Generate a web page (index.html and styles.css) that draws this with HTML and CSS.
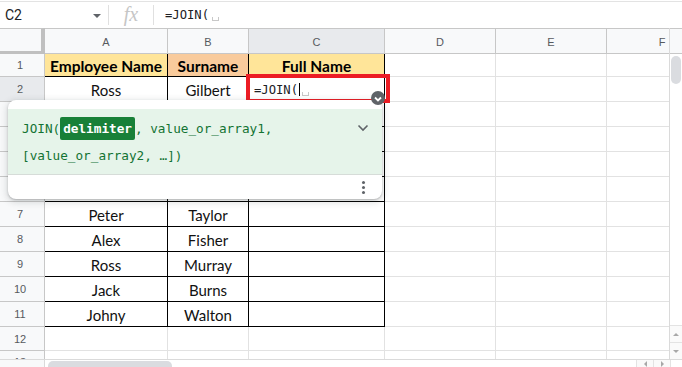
FILE: index.html
```html
<!DOCTYPE html>
<html>
<head>
<meta charset="utf-8">
<link rel="stylesheet" href="styles.css">
</head>
<body>
<div class="app">
  <div class="fbar">
    <div class="namebox"><span class="ref">C2</span><span class="caret-down"></span></div>
    <div class="sep"></div>
    <div class="fx">fx</div>
    <div class="sep"></div>
    <div class="ftext">=JOIN(<span class="spacemark"></span></div>
  </div>

  <div class="main">
    <div class="viewport">
      <div class="sheet">
        <div class="corner"></div>
        <div class="ch">A</div>
        <div class="ch">B</div>
        <div class="ch sel">C</div>
        <div class="ch">D</div>
        <div class="ch">E</div>
        <div class="ch">F</div>

        <div class="rh">1</div>
        <div class="c t hd yel">Employee Name</div>
        <div class="c t hd peach">Surname</div>
        <div class="c t hd yel">Full Name</div>
        <div class="c"></div><div class="c"></div><div class="c"></div>

        <div class="rh sel">2</div>
        <div class="c t">Ross</div>
        <div class="c t">Gilbert</div>
        <div class="c t edit-cell"><span class="etext">=JOIN(</span><span class="cursor"></span><span class="spacemark"></span></div>
        <div class="c"></div><div class="c"></div><div class="c"></div>

        <div class="rh">3</div>
        <div class="c t"></div>
        <div class="c t"></div>
        <div class="c t"></div>
        <div class="c"></div><div class="c"></div><div class="c"></div>

        <div class="rh">4</div>
        <div class="c t"></div>
        <div class="c t"></div>
        <div class="c t"></div>
        <div class="c"></div><div class="c"></div><div class="c"></div>

        <div class="rh">5</div>
        <div class="c t"></div>
        <div class="c t"></div>
        <div class="c t"></div>
        <div class="c"></div><div class="c"></div><div class="c"></div>

        <div class="rh">6</div>
        <div class="c t"></div>
        <div class="c t"></div>
        <div class="c t"></div>
        <div class="c"></div><div class="c"></div><div class="c"></div>

        <div class="rh">7</div>
        <div class="c t">Peter</div>
        <div class="c t">Taylor</div>
        <div class="c t"></div>
        <div class="c"></div><div class="c"></div><div class="c"></div>

        <div class="rh">8</div>
        <div class="c t">Alex</div>
        <div class="c t">Fisher</div>
        <div class="c t"></div>
        <div class="c"></div><div class="c"></div><div class="c"></div>

        <div class="rh">9</div>
        <div class="c t">Ross</div>
        <div class="c t">Murray</div>
        <div class="c t"></div>
        <div class="c"></div><div class="c"></div><div class="c"></div>

        <div class="rh">10</div>
        <div class="c t">Jack</div>
        <div class="c t">Burns</div>
        <div class="c t"></div>
        <div class="c"></div><div class="c"></div><div class="c"></div>

        <div class="rh">11</div>
        <div class="c t">Johny</div>
        <div class="c t">Walton</div>
        <div class="c t"></div>
        <div class="c"></div><div class="c"></div><div class="c"></div>

        <div class="rh">12</div>
        <div class="c"></div><div class="c"></div><div class="c"></div>
        <div class="c"></div><div class="c"></div><div class="c"></div>

        <div class="rh rh13">13</div>
        <div class="c"></div><div class="c"></div><div class="c"></div>
        <div class="c"></div><div class="c"></div><div class="c"></div>
      </div>
    </div>
    <div class="vscroll">
      <div class="vs-head"></div>
      <div class="vs-track"><div class="vs-thumb"></div></div>
      <div class="vs-btn"><span class="tri-up"></span></div>
      <div class="vs-btn"><span class="tri-down"></span></div>
    </div>
  </div>

  <div class="hbar">
    <div class="hb-left"></div>
    <div class="hb-track"><div class="hb-thumb"></div></div>
    <div class="hb-btn"><span class="tri-left"></span></div>
    <div class="hb-btn"><span class="tri-right"></span></div>
    <div class="hb-corner"></div>
  </div>

  <div class="redbox"></div>
  <div class="pill">
    <svg width="8" height="6" viewBox="0 0 8 6"><path d="M1 1.5 L4 4.5 L7 1.5" fill="none" stroke="#fff" stroke-width="1.8"/></svg>
  </div>

  <div class="popup">
    <div class="pop-top"></div>
    <div class="pop-body">
      <div class="sig">JOIN(<span class="hl">delimiter</span>, value_or_array1,<br>[value_or_array2, …])</div>
      <svg class="chev" width="12" height="8" viewBox="0 0 12 8"><path d="M1.5 1.5 L6 6 L10.5 1.5" fill="none" stroke="#5f6368" stroke-width="1.6"/></svg>
    </div>
    <div class="pop-foot">
      <div class="kebab"><span></span><span></span><span></span></div>
    </div>
  </div>
</div>
</body>
</html>
```

FILE: styles.css
```css
* { box-sizing: border-box; }
html, body { margin: 0; padding: 0; }
body {
  width: 682px;
  height: 367px;
  overflow: hidden;
  background: #fff;
  font-family: "Liberation Sans", Arial, sans-serif;
}
.app {
  position: relative;
  width: 682px;
  height: 367px;
  display: flex;
  flex-direction: column;
}

/* formula bar */
.fbar {
  height: 27px;
  margin-top: 1px;
  border-top: 1px solid #e3e3e3;
  display: flex;
  align-items: center;
  flex: none;
}
.namebox {
  width: 108px;
  height: 100%;
  display: flex;
  align-items: center;
  justify-content: space-between;
  padding: 0 7px 0 5px;
}
.ref {
  font-family: Roboto, "Liberation Sans", sans-serif;
  font-size: 14px;
  color: #202124;
}
.caret-down {
  width: 0;
  height: 0;
  border-left: 4px solid transparent;
  border-right: 4px solid transparent;
  border-top: 4px solid #5f6368;
  margin-top: 1px;
}
.sep {
  width: 1px;
  height: 20px;
  background: #e0e0e0;
  flex: none;
}
.fx {
  width: 44px;
  text-align: center;
  font-family: "Liberation Serif", serif;
  font-style: italic;
  font-size: 20px;
  color: #c6c6c6;
  line-height: 20px;
  margin-top: -3px;
}
.ftext {
  padding-left: 11px;
  font-family: "DejaVu Sans Mono", monospace;
  font-size: 12.2px;
  color: #202124;
  display: flex;
  align-items: center;
}
.spacemark {
  display: inline-block;
  width: 7px;
  height: 4px;
  border: 1px solid #c8c8c8;
  border-top: none;
  margin-left: 3px;
  margin-top: 8px;
}

/* grid */
.main {
  display: flex;
  height: 331px;
  flex: none;
}
.viewport {
  width: 669px;
  height: 331px;
  overflow: hidden;
  flex: none;
}
.sheet {
  display: grid;
  grid-template-columns: 45px 123px 81px 136px 111px 111px 111px;
  grid-template-rows: 26px 23px repeat(10, 25px) 24px 25px;
  width: 718px;
}
.corner {
  background: #f8f9fa;
  border-top: 1px solid #c7c7c7;
  border-right: 4px solid #c0c0c0;
  border-bottom: 3px solid #c0c0c0;
}
.ch {
  background: #f8f9fa;
  border-top: 1px solid #c7c7c7;
  border-right: 1px solid #c7c7c7;
  border-bottom: 1px solid #c7c7c7;
  display: flex;
  align-items: center;
  justify-content: center;
  font-size: 11px;
  color: #575a5e;
  padding-top: 1px;
}
.ch.sel, .rh.sel { background: #e8eaed; }
.rh {
  background: #f8f9fa;
  border-right: 1px solid #c7c7c7;
  border-bottom: 1px solid #c7c7c7;
  display: flex;
  align-items: center;
  justify-content: center;
  font-size: 11px;
  color: #575a5e;
  padding-right: 4px;
}
.rh13 { align-items: flex-start; padding-top: 5px; }
.c {
  border-right: 1px solid #e2e2e2;
  border-bottom: 1px solid #e2e2e2;
  display: flex;
  align-items: center;
  justify-content: center;
  font-family: Lato, "Liberation Sans", sans-serif;
  font-size: 15px;
  color: #111;
  padding-top: 2px;
  white-space: nowrap;
}
.c.t {
  border-right-color: #000;
  border-bottom-color: #000;
}
.hd { font-weight: 700; color: #000; font-size: 15.5px; }
.yel { background: #ffe599; }
.peach { background: #f9cb9c; }
.edit-cell {
  justify-content: flex-start;
  padding-left: 5px;
  padding-top: 1px;
}
.etext {
  font-family: "DejaVu Sans Mono", monospace;
  font-size: 12.2px;
  color: #202124;
}
.cursor {
  width: 1px;
  height: 13px;
  background: #000;
  margin-left: 1px;
}
.edit-cell .spacemark { margin-left: 2px; margin-top: 9px; }

/* vertical scrollbar */
.vscroll {
  width: 13px;
  flex: none;
  display: flex;
  flex-direction: column;
  border-left: 1px solid #dadada;
}
.vs-head {
  height: 26px;
  background: #f8f9fa;
  border-top: 1px solid #c7c7c7;
  border-bottom: 1px solid #c7c7c7;
  flex: none;
}
.vs-track {
  height: 271px;
  flex: none;
  padding-top: 2px;
}
.vs-thumb {
  width: 10px;
  height: 28px;
  margin-left: 1px;
  background: #dadce0;
  border-radius: 5px;
}
.vs-btn {
  height: 17px;
  flex: none;
  border-top: 1px solid #e3e3e3;
  display: flex;
  align-items: center;
  justify-content: center;
  background: #fafafa;
}
.tri-up, .tri-down, .tri-left, .tri-right { width: 0; height: 0; }
.tri-up {
  border-left: 3px solid transparent;
  border-right: 3px solid transparent;
  border-bottom: 3px solid #a8a8a8;
}
.tri-down {
  border-left: 3px solid transparent;
  border-right: 3px solid transparent;
  border-top: 3px solid #a8a8a8;
}
.tri-left {
  border-top: 3px solid transparent;
  border-bottom: 3px solid transparent;
  border-right: 3px solid #a8a8a8;
}
.tri-right {
  border-top: 3px solid transparent;
  border-bottom: 3px solid transparent;
  border-left: 3px solid #a8a8a8;
}

/* horizontal scrollbar */
.hbar {
  height: 9px;
  display: flex;
  border-top: 1px solid #dadada;
  flex: none;
}
.hb-left {
  width: 45px;
  flex: none;
  background: #f8f9fa;
  border-right: 1px solid #dadada;
}
.hb-track {
  flex: 1;
  padding: 1px 0 0 3px;
}
.hb-thumb {
  width: 124px;
  height: 10px;
  background: #dadce0;
  border-radius: 5px;
}
.hb-btn {
  width: 17px;
  flex: none;
  border-left: 1px solid #e3e3e3;
  background: #fafafa;
  display: flex;
  align-items: center;
  justify-content: center;
}
.hb-corner {
  width: 12px;
  flex: none;
  border-left: 1px solid #e3e3e3;
  background: #fff;
}

/* overlays */
.redbox {
  position: absolute;
  left: 246px;
  top: 74px;
  width: 144px;
  height: 29px;
  border: 4px solid #ec1c24;
  z-index: 3;
}
.pill {
  position: absolute;
  left: 371px;
  top: 91px;
  width: 14px;
  height: 14px;
  border-radius: 50%;
  background: #5f6368;
  z-index: 5;
  display: flex;
  align-items: center;
  justify-content: center;
  padding-top: 1px;
}
.popup {
  position: absolute;
  left: 8px;
  top: 100px;
  width: 374px;
  height: 99px;
  background: #fff;
  border-radius: 8px;
  box-shadow: 0 1px 2px rgba(60,64,67,0.3), 0 2px 6px 2px rgba(60,64,67,0.15);
  z-index: 4;
  display: flex;
  flex-direction: column;
  overflow: hidden;
}
.pop-top { height: 9px; flex: none; }
.pop-body {
  height: 66px;
  flex: none;
  background: #e6f4ea;
  border-bottom: 1px solid #d6dcd8;
  display: flex;
  justify-content: space-between;
  padding: 6px 13px 0 14px;
}
.sig {
  font-family: "DejaVu Sans Mono", monospace;
  font-size: 12.7px;
  line-height: 27px;
  color: #137333;
  white-space: nowrap;
}
.hl {
  background: #188038;
  color: #fff;
  font-weight: 700;
  padding: 4px 3px;
  border-radius: 2px;
}
.chev { margin-top: 9px; }
.pop-foot {
  flex: 1;
  display: flex;
  justify-content: flex-end;
  align-items: center;
  padding-right: 17px;
}
.kebab {
  display: flex;
  flex-direction: column;
  gap: 2px;
}
.kebab span {
  width: 3px;
  height: 3px;
  border-radius: 50%;
  background: #5f6368;
}
```
